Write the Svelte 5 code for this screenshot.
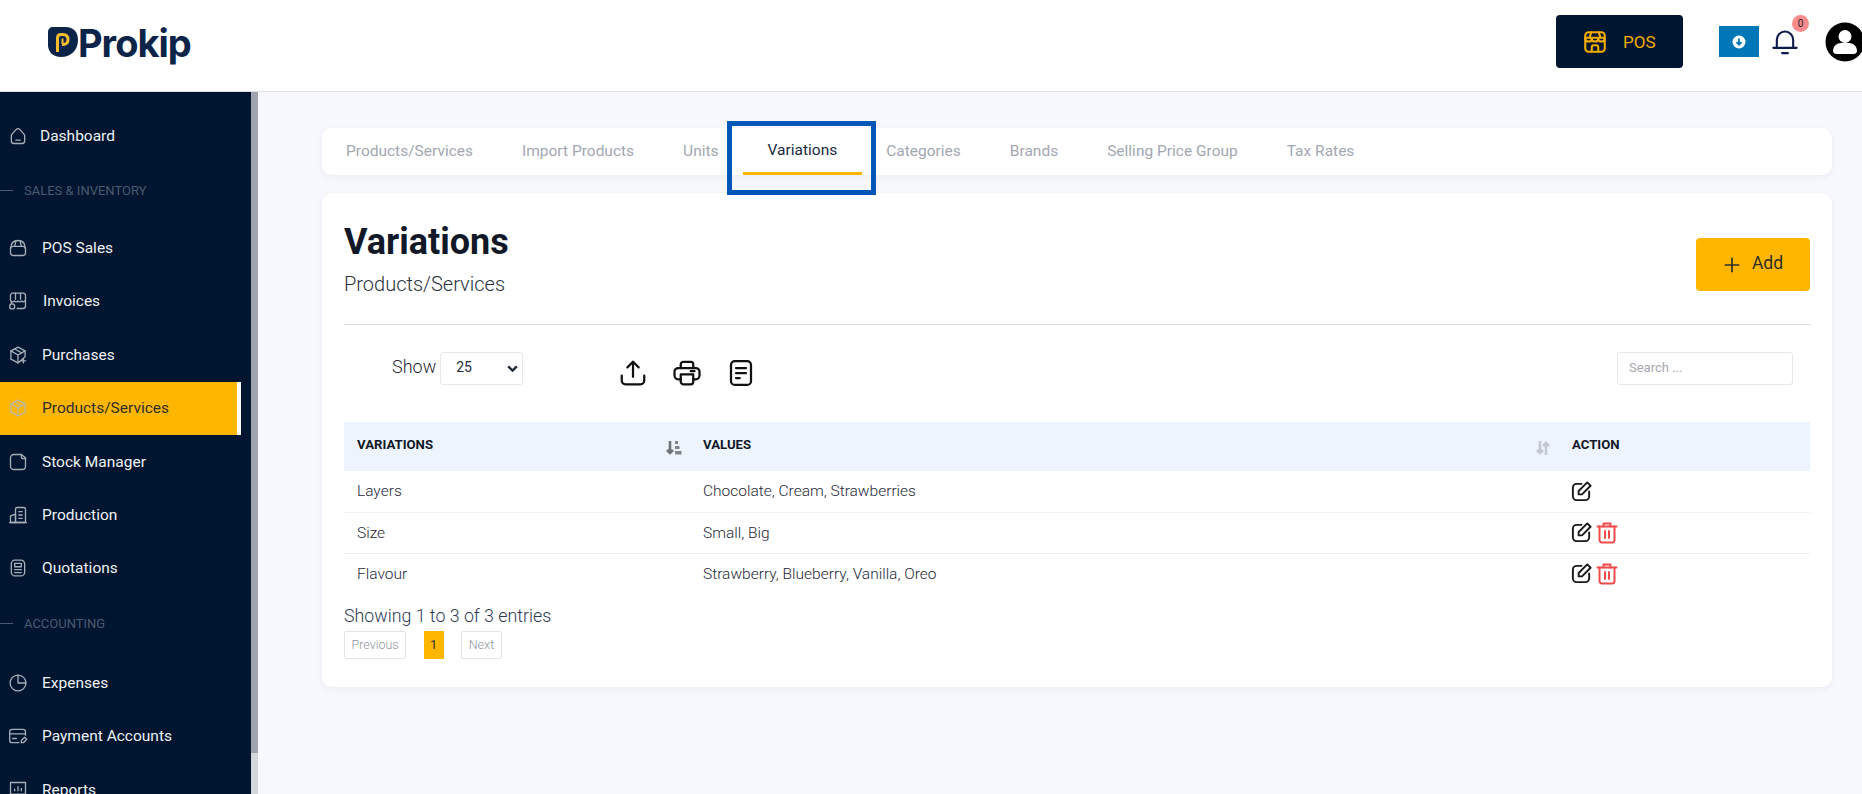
<script lang="ts">
	// stroke paths on a 24 grid for the sidebar and toolbar icons
	const icons: Record<string, string[]> = {
		home: ['M5 9.500 10 4a3 3 0 0 1 4 0l5 5.500a3 3 0 0 1 1 2.500V18a3 3 0 0 1-3 3H7a3 3 0 0 1-3-3v-6a3 3 0 0 1 1-2.500z', 'M9.500 17h5'],
		bag: ['M6 10h12a3 3 0 0 1 3 3v5a3 3 0 0 1-3 3H6a3 3 0 0 1-3-3v-5a3 3 0 0 1 3-3z', 'M3.500 12C3.500 6 7 3 12 3s8.500 3 8.500 9', 'M9.500 3.500 8 10M14.500 3.500 16 10'],
		shop: ['M7 2.500h11a3 3 0 0 1 3 3v5a2.500 2.500 0 0 1-4.500 1.500 3 3 0 0 1-4.500 0 3 3 0 0 1-4.500 0A2.500 2.500 0 0 1 3 10.500v-5a3 3 0 0 1 4-3z', 'M4 13v2M21 11v7a3 3 0 0 1-3 3h-7', 'M9 2.500V10M15 2.500V10', 'M2 18.500a3 3 0 1 0 6 0 3 3 0 1 0-6 0'],
		box: ['M12 2.500 20.500 7v7L12 21.500 3.500 17V7z', 'M3.500 7 12 12l8.500-5M12 12v9.500', 'M8 4.800 16.500 9.500', 'M18.500 16.500v5M16 19h5'],
		cube: ['M12 2.500 20.500 7v10L12 21.500 3.500 17V7z', 'M3.500 7 12 12l8.500-5M12 12v9.500', 'M8 4.800 16.500 9.500'],
		file: ['M7 3h9l5 4v10a4 4 0 0 1-4 4H7a4 4 0 0 1-4-4V7a4 4 0 0 1 4-4z', 'M16 3v2a3 3 0 0 0 3 3h2'],
		building: ['M3 21v-8l6-2v10z', 'M9 21V5a2 2 0 0 1 2-2h8a2 2 0 0 1 2 2v16z', 'M2 21h20', 'M13 8h4M13 12h4M13 16h4'],
		calc: ['M8.500 2.500h7a4.500 4.500 0 0 1 4.500 4.500v10a4.500 4.500 0 0 1-4.500 4.500h-7A4.500 4.500 0 0 1 4 17V7a4.500 4.500 0 0 1 4.500-4.500z', 'M8 6.500h8v4H8z', 'M8 14h2M11 14h2M14 14h2M8 17.500h2M11 17.500h2M14 17.500h2'],
		pie: ['M21.500 12a9.500 9.500 0 1 1-9.500-9.500', 'M12 2.500A9.500 9.500 0 0 1 21.500 12H12z'],
		card: ['M21 11V7a3 3 0 0 0-3-3H5a3 3 0 0 0-3 3v10a3 3 0 0 0 3 3h8', 'M2 9.500h19', 'M5.500 15H10', 'M16 20v-2.500l4-4 2.500 2.500-4 4z'],
		screen: ['M3 3h18v14H3z', 'M8 13v-2M12 13V8M16 13v-3', 'M7 21h10M12 17v4'],
		upload: ['M12 15V3', 'M7.500 7.500 12 3l4.500 4.500', 'M3 14v4a3 3 0 0 0 3 3h12a3 3 0 0 0 3-3v-4'],
		printer: ['M7 8V5a2 2 0 0 1 2-2h6a2 2 0 0 1 2 2v3', 'M7 17H5a3 3 0 0 1-3-3v-3a3 3 0 0 1 3-3h14a3 3 0 0 1 3 3v3a3 3 0 0 1-3 3h-2', 'M7 13h10v6a2 2 0 0 1-2 2H9a2 2 0 0 1-2-2z', 'M15 10.500h3'],
		note: ['M7 2.500h10a3 3 0 0 1 3 3v13a3 3 0 0 1-3 3H7a3 3 0 0 1-3-3v-13a3 3 0 0 1 3-3z', 'M8 8h8M8 12h8M8 16h3'],
		edit: ['M12 4H7a4 4 0 0 0-4 4v9a4 4 0 0 0 4 4h9a4 4 0 0 0 4-4v-5', 'M9 15v-3.500L18 2.500 21.500 6 12.500 15z'],
		trash: ['M2.500 5.500h19', 'M8.500 5.500V2.500h7v3', 'M4.500 5.500V19a2.500 2.500 0 0 0 2.500 2.500h10a2.500 2.500 0 0 0 2.500-2.500V5.500', 'M10 10v7M14 10v7'],
		plus: ['M12 3v18M3 12h18'],
		bell: ['M5 17V10a7 7 0 0 1 14 0v7', 'M2 17h20', 'M9.500 21.500h5'],
		store: ['M6 3h12a3 3 0 0 1 3 3v12a3 3 0 0 1-3 3H6a3 3 0 0 1-3-3V6a3 3 0 0 1 3-3z', 'M3 9c0 3.500 6 3.500 6 0 0 3.500 6 3.500 6 0 0 3.500 6 3.500 6 0', 'M9 21v-4a2 2 0 0 1 2-2h2a2 2 0 0 1 2 2v4', 'M3 8h18', 'M8.500 3 7 8M15.500 3 17 8']
	};

	const navTop = [
		{ type: 'item', label: 'Dashboard', icon: 'home', x: 40 },
		{ type: 'section', label: 'SALES & INVENTORY', h: 59, lift: 2 },
		{ type: 'item', label: 'POS Sales', icon: 'bag', x: 42 },
		{ type: 'item', label: 'Invoices', icon: 'shop', x: 43 },
		{ type: 'item', label: 'Purchases', icon: 'box', x: 42 },
		{ type: 'item', label: 'Products/Services', icon: 'cube', x: 42, active: true },
		{ type: 'item', label: 'Stock Manager', icon: 'file', x: 42 },
		{ type: 'item', label: 'Production', icon: 'building', x: 42 },
		{ type: 'item', label: 'Quotations', icon: 'calc', x: 42 },
		{ type: 'section', label: 'ACCOUNTING', h: 61, lift: 5 },
		{ type: 'item', label: 'Expenses', icon: 'pie', x: 42 },
		{ type: 'item', label: 'Payment Accounts', icon: 'card', x: 42 },
		{ type: 'item', label: 'Reports', icon: 'screen', x: 42 }
	];

	const tabs = ['Products/Services', 'Import Products', 'Units', 'Variations', 'Categories', 'Brands', 'Selling Price Group', 'Tax Rates'];

	const rows = [
		{ name: 'Layers', values: 'Chocolate, Cream, Strawberries', canDelete: false },
		{ name: 'Size', values: 'Small, Big', canDelete: true },
		{ name: 'Flavour', values: 'Strawberry, Blueberry, Vanilla, Oreo', canDelete: true }
	];
</script>

{#snippet icon(name: string, cls: string)}
	<svg class={cls} viewBox="0 0 24 24" fill="none" stroke="currentColor" stroke-linecap="round" stroke-linejoin="round">
		{#each icons[name] as d}
			<path {d} />
		{/each}
	</svg>
{/snippet}

<div class="page">
	<header class="topbar">
		<div class="logo">
			<svg class="logo-mark" viewBox="0 0 30 31">
				<path d="M5 0H18C25 0 30 5 30 13C30 23 23 30 13 30C5 30 0 25 0 18V5C0 2 2 0 5 0Z" fill="#0b2447" />
				<path d="M9.500 25V11Q9.500 7.500 13 7.500H15Q20 7.500 20 12.500T15 17.500H14" fill="none" stroke="#f5bd2e" stroke-width="3" />
				<path d="M14.500 17V12.500H15.500" fill="none" stroke="#f5bd2e" stroke-width="2" />
			</svg>
			<span class="logo-text">Prokip</span>
		</div>
		<div class="top-actions">
			<button class="pos-btn">
				{@render icon('store', 'pos-icon')}
				<span>POS</span>
			</button>
			<button class="download-btn" aria-label="Download">
				<svg viewBox="0 0 16 16" width="16" height="16">
					<circle cx="8" cy="8" r="6.500" fill="#fff" />
					<path d="M8 4.500v6M5.500 8.200 8 10.700l2.500-2.500" fill="none" stroke="#0077b6" stroke-width="1.800" />
				</svg>
			</button>
			<div class="bell">
				{@render icon('bell', 'bell-icon')}
				<span class="bell-badge">0</span>
			</div>
			<svg class="avatar" viewBox="0 0 40 40">
				<circle cx="20" cy="20" r="19.500" fill="#000" />
				<circle cx="20" cy="14.500" r="6.500" fill="#fff" />
				<path d="M8 29c0-5 4-8 8-8h8c4 0 8 3 8 8 0 2-2 3-3 3H11c-1 0-3-1-3-3z" fill="#fff" />
			</svg>
		</div>
	</header>

	<div class="body">
		<aside class="sidebar">
			<nav class="nav">
				{#each navTop as item}
					{#if item.type === 'section'}
						<div class="nav-section" style="height: {item.h}px; padding-bottom: {item.lift}px">
							<span class="dash"></span>
							<span>{item.label}</span>
						</div>
					{:else}
						<div class="nav-item" class:active={item.active}>
							{@render icon(item.icon ?? '', 'nav-icon')}
							<span style="margin-left: {item.x - 28}px" class="nav-label">{item.label}</span>
						</div>
					{/if}
				{/each}
			</nav>
			<div class="scrollbar"><div class="thumb"></div></div>
		</aside>

		<main class="content">
			<div class="tabs">
				{#each tabs as tab}
					<div class="tab" class:current={tab === 'Variations'}>{tab}</div>
				{/each}
			</div>

			<section class="card">
				<div class="card-head">
					<div>
						<h1>Variations</h1>
						<p>Products/Services</p>
					</div>
					<button class="add-btn">
						{@render icon('plus', 'plus-icon')}
						<span>Add</span>
					</button>
				</div>

				<div class="toolbar">
					<div class="show">
						<span>Show</span>
						<div class="select">
							<span>25</span>
							<svg viewBox="0 0 12 12" width="13" height="13"><path d="M2 4l4 4 4-4" fill="none" stroke="#1f2937" stroke-width="2.200" /></svg>
						</div>
					</div>
					<div class="tools">
						{@render icon('upload', 'tool-icon')}
						{@render icon('printer', 'tool-icon')}
						{@render icon('note', 'tool-icon')}
					</div>
					<div class="search">Search ...</div>
				</div>

				<table>
					<thead>
						<tr>
							<th class="col-a">
								VARIATIONS
								<svg class="sort" viewBox="0 0 16 16"><path d="M4 1v12M1 10 4 13l3-3" fill="none" stroke="#6f747e" stroke-width="2.600" /><path d="M9 1h3v3H9zM9 6h4.500v3H9zM9 11h6.500v3.500H9z" fill="#80858f" /></svg>
							</th>
							<th class="col-b">
								VALUES
								<svg class="sort" viewBox="0 0 16 16"><path d="M5 1v12M2 10 5 13l3-3M11 15V3M8 6 11 3l3 3" fill="none" stroke="#c3c8d1" stroke-width="2.600" /></svg>
							</th>
							<th>ACTION</th>
						</tr>
					</thead>
					<tbody>
						{#each rows as row}
							<tr>
								<td>{row.name}</td>
								<td>{row.values}</td>
								<td>
									<div class="actions">
										{@render icon('edit', 'edit-icon')}
										{#if row.canDelete}
											{@render icon('trash', 'trash-icon')}
										{/if}
									</div>
								</td>
							</tr>
						{/each}
					</tbody>
				</table>

				<div class="info">Showing 1 to 3 of 3 entries</div>
				<div class="pager">
					<span class="pg">Previous</span>
					<span class="pg-current">1</span>
					<span class="pg">Next</span>
				</div>
			</section>
		</main>
	</div>
</div>

<style>
	:global(body) {
		margin: 0;
		font-family: Roboto, 'Liberation Sans', sans-serif;
		overflow: hidden;
	}

	svg {
		display: block;
		flex-shrink: 0;
	}

	button {
		font-family: inherit;
		border: none;
		cursor: pointer;
	}

	.page {
		height: 794px;
		display: flex;
		flex-direction: column;
		overflow: hidden;
		background: #f6f8fd;
	}

	/* ─── Topbar ─────────────────────────────────────────────────────── */

	.topbar {
		height: 91px;
		flex-shrink: 0;
		border-bottom: 1px solid #dfe1e6;
		background: #fff;
		display: flex;
		align-items: center;
		justify-content: space-between;
		padding-left: 48px;
	}

	.logo {
		display: flex;
		align-items: center;
		margin-top: -6px;
	}

	.logo-mark {
		width: 30px;
		height: 31px;
	}

	.logo-text {
		font-family: Inter, sans-serif;
		font-weight: 700;
		font-size: 38px;
		letter-spacing: -1px;
		color: #0b2447;
	}

	.top-actions {
		display: flex;
		align-items: center;
		margin-top: -8px;
	}

	.pos-btn {
		width: 127px;
		height: 53px;
		margin-right: 36px;
		border-radius: 4px;
		background: #00152f;
		color: #f5ad00;
		font-size: 17px;
		display: flex;
		align-items: center;
		padding-left: 26px;
		gap: 15px;
	}

	.download-btn {
		width: 40px;
		height: 31px;
		background: #0077b6;
		padding: 0;
		display: flex;
		align-items: center;
		justify-content: center;
		margin-right: 12px;
	}

	.bell {
		position: relative;
		width: 28px;
		height: 28px;
		margin-right: 26px;
		color: #0d1b4c;
	}

	.bell-badge {
		position: absolute;
		top: -13px;
		left: 21px;
		width: 17px;
		height: 17px;
		border-radius: 50%;
		background: #fb8c8c;
		color: #222;
		font-size: 10px;
		line-height: 17px;
		text-align: center;
	}

	.avatar {
		width: 40px;
		height: 40px;
		margin-right: -3px;
	}

	/* ─── Sidebar ────────────────────────────────────────────────────── */

	.body {
		flex: 1;
		display: flex;
		min-height: 0;
	}

	.sidebar {
		width: 258px;
		flex-shrink: 0;
		display: flex;
		background: #00152f;
		overflow: hidden;
	}

	.nav {
		flex: 1;
		padding-top: 17px;
		padding-right: 10px;
		min-width: 0;
	}

	.nav-item {
		height: 53.4px;
		display: flex;
		align-items: center;
		padding-left: 8px;
		color: #eef1f5;
		font-size: 15.500px;
		white-space: nowrap;
	}

	.nav-item.active {
		background: #ffb600;
		color: #2c2f2e;
		border-right: 4px solid #fff;
	}

	.nav-item.active :global(.nav-icon) {
		color: #b9b6a0;
	}

	.nav-section {
		display: flex;
		align-items: center;
		box-sizing: border-box;
		gap: 11px;
		font-size: 13px;
		color: #4b5a6e;
	}

	.dash {
		width: 13px;
		height: 1px;
		background: #4b5a6e;
	}

	.scrollbar {
		width: 7px;
		background: #d4d6da;
	}

	.thumb {
		height: 661px;
		background: #9fa3b0;
	}

	/* ─── Content ────────────────────────────────────────────────────── */

	.content {
		flex: 1;
		min-width: 0;
		padding: 36px 30px 0 64px;
	}

	.tabs {
		height: 47px;
		display: flex;
		background: #fff;
		border-radius: 10px;
		box-shadow: 0 2px 6px rgba(30, 40, 80, 0.05);
		padding-left: 24px;
		margin-bottom: 18px;
	}

	.tab {
		position: relative;
		padding: 0 24.5px;
		font-size: 15.500px;
		line-height: 47px;
		color: #a2a7b1;
		white-space: nowrap;
	}

	.tab:first-child {
		padding-left: 0;
	}

	.tab.current {
		color: #1b2a41;
		line-height: 44px;
	}

	/* underline plus the blue highlight that was drawn over the tab */
	.tab.current::after {
		content: '';
		position: absolute;
		left: 0;
		right: 0;
		bottom: 0;
		height: 3px;
		background: #ffb600;
	}

	.tab.current::before {
		content: '';
		position: absolute;
		left: -16px;
		right: -14px;
		top: -7px;
		bottom: -20px;
		border: 5px solid #0057b8;
	}

	.card {
		background: #fff;
		border-radius: 10px;
		box-shadow: 0 2px 6px rgba(30, 40, 80, 0.05);
		height: 494px;
		box-sizing: border-box;
		padding: 28px 22px 0;
	}

	.card-head {
		height: 103px;
		display: flex;
		justify-content: space-between;
		border-bottom: 1px solid #d9dbe0;
	}

	h1 {
		margin: 0;
		font-size: 36px;
		line-height: 42px;
		font-weight: 700;
		color: #111827;
	}

	.card-head p {
		margin: 9px 0 0;
		font-size: 20px;
		font-weight: 300;
		color: #2b3340;
	}

	.add-btn {
		width: 114px;
		height: 53px;
		margin-top: 17px;
		border-radius: 4px;
		background: #ffb600;
		color: #2c2f2e;
		font-size: 17.500px;
		display: flex;
		align-items: center;
		justify-content: center;
		gap: 11px;
	}

	.add-btn span {
		margin-top: -3px;
	}

	.toolbar {
		height: 97px;
		display: flex;
		padding-top: 27px;
		box-sizing: border-box;
	}

	.show {
		display: flex;
		gap: 4px;
		margin-left: 48px;
		width: 225.5px;
		font-size: 18px;
		font-weight: 300;
		color: #1f2937;
		line-height: 29px;
	}

	.select {
		width: 83px;
		height: 33px;
		box-sizing: border-box;
		border: 1px solid #e6e8ee;
		border-radius: 3px;
		display: flex;
		align-items: center;
		justify-content: space-between;
		padding: 0 3px 0 15px;
		font-size: 14px;
		font-weight: 400;
	}

	.select span {
		margin-top: -2px;
	}

	.tools {
		display: flex;
		gap: 24px;
		margin-top: 6px;
		color: #111;
	}

	.search {
		margin-left: auto;
		margin-right: 17px;
		width: 176px;
		height: 33px;
		box-sizing: border-box;
		border: 1px solid #e6e8ee;
		border-radius: 3px;
		padding-left: 11px;
		font-size: 13px;
		line-height: 29px;
		color: #a6a9af;
	}

	table {
		width: 100%;
		border-collapse: collapse;
		table-layout: fixed;
	}

	th {
		position: relative;
		height: 49px;
		padding: 0 13px 4px;
		box-sizing: border-box;
		background: #edf4fd;
		font-size: 13.200px;
		font-weight: 700;
		color: #111827;
		text-align: left;
	}

	.col-a {
		width: 346px;
	}

	.col-b {
		width: 869px;
	}

	.sort {
		position: absolute;
		right: 8px;
		top: 18px;
		width: 16px;
		height: 16px;
	}

	td {
		height: 41px;
		padding: 0 13px;
		box-sizing: border-box;
		font-size: 15.500px;
		font-weight: 300;
		color: #1f2937;
		border-bottom: 1px solid #f1f2f5;
	}

	tr:last-child td {
		border-bottom: none;
	}

	.actions {
		display: flex;
		align-items: center;
		gap: 1.5px;
		margin-left: -2px;
		color: #1a1a1a;
	}

	.info {
		margin-top: 11px;
		font-size: 17.800px;
		font-weight: 300;
		color: #2b3a52;
	}

	.pager {
		display: flex;
		align-items: stretch;
		height: 28px;
		gap: 17.5px;
		margin-top: 5px;
	}

	.pg {
		border: 1px solid #e4e5e9;
		border-radius: 2px;
		padding: 0 6.5px;
		font-size: 12.500px;
		font-weight: 300;
		line-height: 26px;
		color: #8f949c;
	}

	.pg-current {
		width: 20px;
		background: #ffb600;
		font-size: 13px;
		line-height: 28px;
		text-align: center;
		color: #333;
	}

	/* ─── Icon sizes ─────────────────────────────────────────────────── */

	:global(.nav-icon) {
		width: 20px;
		height: 20px;
		color: #a6adb8;
		stroke-width: 1.6;
	}

	:global(.pos-icon) {
		width: 26px;
		height: 26px;
		stroke-width: 1.9;
	}

	:global(.bell-icon) {
		width: 28px;
		height: 28px;
		stroke-width: 1.800;
	}

	:global(.plus-icon) {
		width: 18px;
		height: 18px;
		stroke-width: 2.200;
	}

	:global(.tool-icon) {
		width: 30px;
		height: 30px;
		stroke-width: 1.8;
	}

	:global(.edit-icon) {
		width: 23px;
		height: 23px;
		stroke-width: 2;
	}

	:global(.trash-icon) {
		width: 24px;
		height: 24px;
		stroke-width: 2;
		color: #f24b4b;
	}
</style>
